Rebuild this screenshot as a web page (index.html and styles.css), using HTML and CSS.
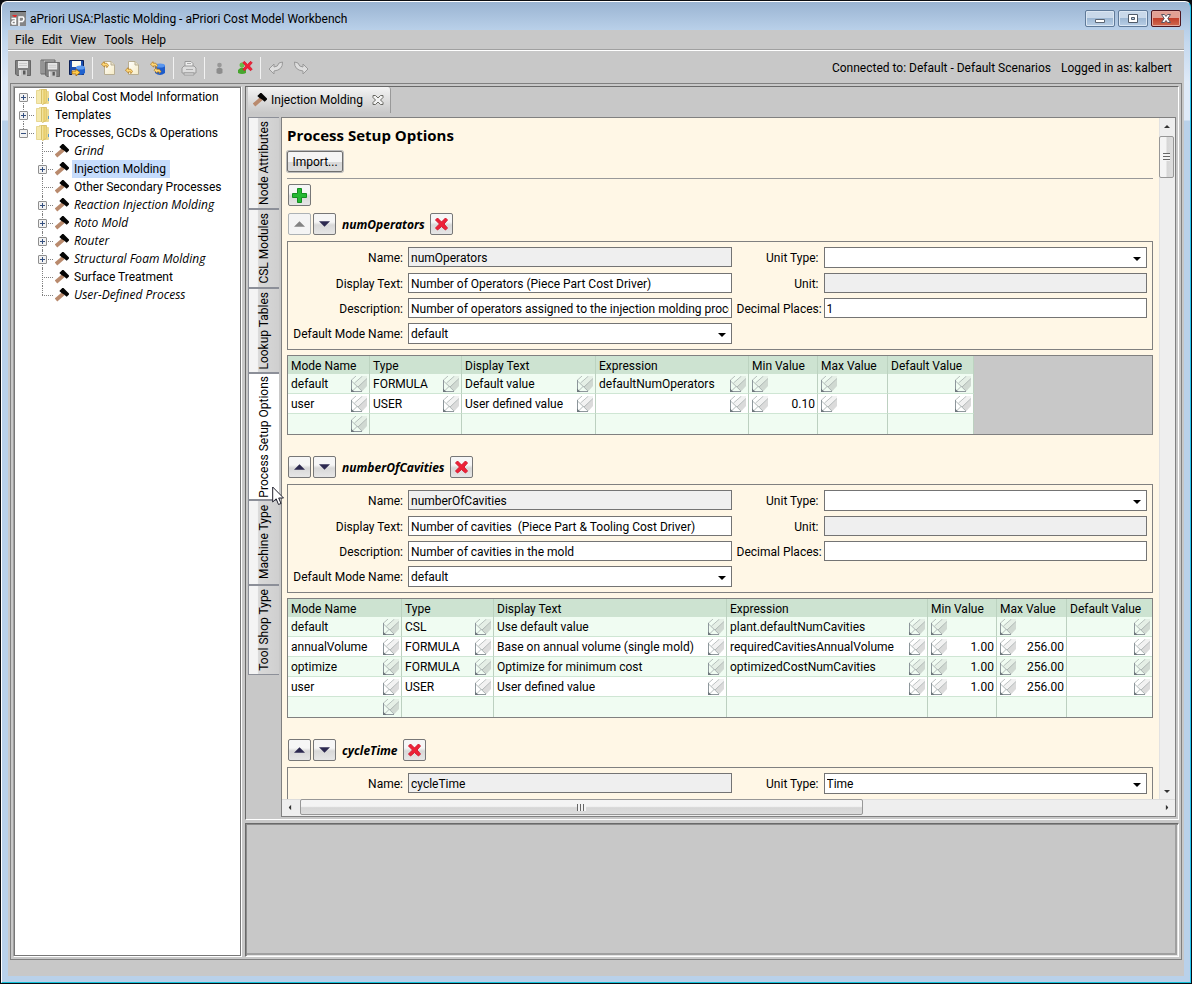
FILE: index.html
```html
<!DOCTYPE html>
<html lang="en">
<head>
<meta charset="utf-8">
<title>aPriori USA:Plastic Molding - aPriori Cost Model Workbench</title>
<link rel="stylesheet" href="styles.css">
</head>
<body>
<svg class="defs" aria-hidden="true">
  <defs>
    <linearGradient id="gold" x1="0" x2="1"><stop offset="0" stop-color="#fbf3c0"/><stop offset=".5" stop-color="#e6cb66"/><stop offset="1" stop-color="#f0dd8e"/></linearGradient>
    <linearGradient id="page-fill" x1="0" y1="0" x2="1" y2="1"><stop offset="0" stop-color="#fff"/><stop offset="1" stop-color="#f6ebc4"/></linearGradient>
    <symbol id="pencil" viewBox="0 0 16 16">
      <path d="M11 15.500L16 10V3L7 11z" fill="#888" fill-opacity=".3"/>
      <path d="M3 8L12 0H16V3L7 11z" fill="#999" fill-opacity=".13"/>
      <path d="M0 4.500L5 0M3.500 7L11.500 0M7 11L16 2.500" stroke="#909898" stroke-opacity=".6" fill="none"/>
      <path d="M.5 5L11 15M6.500 10L1 15.500" stroke="#a3abab" stroke-opacity=".8" fill="none"/>
      <path d="M.5 4V15.500H11" stroke="#8e979c" fill="none"/>
      <path d="M0 12.500L3.500 16H0z" fill="#6d767c"/>
    </symbol>
    <symbol id="hammer" viewBox="0 0 14 14">
      <path d="M1 12L8.500 5.500" stroke="#b98a6d" stroke-width="3.800"/>
      <path d="M4.300 3L7.300 0H8.500L14 5.500V6.500L11.700 8.800L9 6.500L6.500 5z" fill="#050505"/>
    </symbol>
    <symbol id="folder" viewBox="0 0 14 16">
      <path d="M.5 1.500H3.500V.5H5.500V14.500H.5z" fill="#f5e9ad" stroke="#dcc468" stroke-width=".6"/>
      <path d="M5.500 .5H10.500V13.500L6.500 15.500L5.500 14.500z" fill="url(#gold)" stroke="#cdb04a" stroke-width=".7"/>
      <path d="M10.500 2.500H12.500V14.500H8.500L10.500 13.500z" fill="#f0de90" stroke="#dcc468" stroke-width=".5"/>
      <path d="M12.500 9V12" stroke="#5e9bc9"/>
    </symbol>
    <symbol id="cross" viewBox="0 0 14 14">
      <path d="M1 3L3 1L7 5L11 1L13 3L9.500 7L13 11L11 13L7 9.500L3 13L1 11L5 7z" fill="#ee2137" stroke="#d5182e" stroke-width="1"/>
    </symbol>
    <symbol id="up" viewBox="0 0 10 5"><path d="M0 5L5 0L10 5z" fill="currentColor"/></symbol>
    <symbol id="down" viewBox="0 0 10 5"><path d="M0 0H10L5 5z" fill="currentColor"/></symbol>
    <symbol id="swap" viewBox="0 0 9 9">
      <path d="M.5 3.500L3.500 .8V2.500H6.500L8.500 5L6.500 7.500V5.500H4V7L.5 3.500z" fill="#ffd978" stroke="#b0761c" stroke-width=".8"/>
    </symbol>
    <symbol id="floppy" viewBox="0 0 16 16">
      <path d="M.5 .5H15.500V15.500H2L.5 14z" fill="#808080" stroke="#666"/>
      <path d="M3 1H13V8H3z" fill="#e6e6e6"/><path d="M4 3.500H12M4 5.500H12" stroke="#cacaca"/>
      <path d="M4 10H12V16H4z" fill="#c4c4c4"/><path d="M8 10.500H10.500V14.500H8z" fill="#5a5a5a"/>
      <path d="M5 10V15.500" stroke="#eee"/>
    </symbol>
  </defs>
</svg>

<div class="window">
  <header class="titlebar">
    <svg class="app-icon" viewBox="0 0 16 16" aria-hidden="true"><path d="M0 0H16V15H0z" fill="#858585"/><path d="M0 0H16V1H0z" fill="#222"/><path d="M2 4H7L6 6H4z" fill="#e22a2a"/><path d="M1.500 7.500H5.500V13H2.500Q1 11.500 3 10H5.500M9 15V6H13Q15 8 12.500 10.500H9" fill="none" stroke="#fff" stroke-width="1.500"/></svg>
    <h1 class="window-title">aPriori USA:Plastic Molding - aPriori Cost Model Workbench</h1>
    <div class="window-buttons">
      <button class="wb" aria-label="Minimize"><svg viewBox="0 0 28 15"><path d="M9.500 8.500H18.500V11.500H9.500z" fill="#fff" stroke="#5b6674"/></svg></button>
      <button class="wb" aria-label="Maximize"><svg viewBox="0 0 28 15"><path d="M9.500 3.500H18.500V11.500H9.500z" fill="#fff" stroke="#4f5a68"/><path d="M12.500 6.500H15.500V8.500H12.500z" fill="#b8cde4" stroke="#4f5a68"/></svg></button>
      <button class="wb wb-close" aria-label="Close"><svg viewBox="0 0 28 15"><path d="M9.500 3.500H12.500L14 5.500L15.500 3.500H18.500L15.800 7.500L18.500 11.500H15.500L14 9.500L12.500 11.500H9.500L12.200 7.500z" fill="#fff" stroke="#5b5560"/></svg></button>
    </div>
  </header>

  <nav class="menubar" aria-label="Main menu">
    <button>File</button><button>Edit</button><button>View</button><button>Tools</button><button>Help</button>
  </nav>

  <div class="toolbar">
    <div class="tool-group">
      <button aria-label="Save"><svg width="16" height="16"><use href="#floppy"/></svg></button>
      <button aria-label="Save all"><svg width="20" height="18" viewBox="0 0 20 18"><path d="M1 1H15V3H5V15H1z" fill="#c4c4c4" stroke="#666"/><path d="M3 1V15" stroke="#666"/><svg x="5" y="3" width="15" height="15"><use href="#floppy"/></svg></svg></button>
      <button aria-label="Save to database"><svg width="16" height="16" viewBox="0 0 16 16"><path d="M.5 .5H14.500V14.500H.5z" fill="#1c4fae" stroke="#0b1f55"/><path d="M3 1H12V7H3z" fill="#fbfbef"/><path d="M3 10H8V15H3z" fill="#ddd"/><path d="M7 7V13Q11.500 17 16 13V7z" fill="#1f62cf"/><ellipse cx="11.500" cy="7.500" rx="4.500" ry="2" fill="#5d9cf2"/><path d="M3 11H7V9L11 12.500L7 16V14H3z" fill="#ffcc4a" stroke="#a4650c" stroke-width=".8"/></svg></button>
    </div>
    <div class="tool-group">
      <button aria-label="Check out"><svg width="16" height="16" viewBox="0 0 16 16"><path d="M4.500 1.500H11L14.500 5V14.500H4.500z" fill="url(#page-fill)" stroke="#b8ae93"/><path d="M11 1.500V5H14.500" fill="#e8e0c8" stroke="#b8ae93"/><use href="#swap" x="1" y="1" width="8" height="8"/></svg></button>
      <button aria-label="Check in"><svg width="16" height="16" viewBox="0 0 16 16"><path d="M3.500 1.500H10L13.500 5V14.500H3.500z" fill="url(#page-fill)" stroke="#b8ae93"/><path d="M10 1.500V5H13.500" fill="#e8e0c8" stroke="#b8ae93"/><use href="#swap" x="0" y="7" width="8" height="8"/></svg></button>
      <button aria-label="Synchronize"><svg width="16" height="16" viewBox="0 0 16 16"><path d="M5 5V13Q10 17 15 13V5z" fill="#1d5ccb"/><ellipse cx="10" cy="5.500" rx="5" ry="2" fill="#5a96ee"/><use href="#swap" x="0" y="1" width="8" height="8"/><use href="#swap" x="3" y="7" width="9" height="8"/></svg></button>
    </div>
    <div class="tool-group">
      <button aria-label="Print"><svg width="16" height="16" viewBox="0 0 16 16"><path d="M4 7V1.500H10L12 3.500V7" fill="#eee" stroke="#999"/><path d="M1 8L3 6H13L15 8V13H1z" fill="#ddd" stroke="#999"/><path d="M3 13H13V15H3z" fill="#eee" stroke="#999"/><path d="M6 3.500H10M5 9.500H12" stroke="#aaa"/></svg></button>
    </div>
    <div class="tool-group">
      <button aria-label="User"><svg width="16" height="16" viewBox="0 0 16 16"><circle cx="7.500" cy="5" r="2.300" fill="#989898"/><path d="M4.500 13V9Q7.500 6 10.500 9V13Q7.500 15 4.500 13z" fill="#8d8d8d"/></svg></button>
      <button aria-label="Remove user"><svg width="16" height="16" viewBox="0 0 16 16"><circle cx="5" cy="5" r="2.500" fill="#68bd4b"/><path d="M1 13V10Q5 5 9 10V13Q5 15 1 13z" fill="#46a52e"/><use href="#cross" x="5" y="0" width="11" height="12"/></svg></button>
    </div>
    <div class="tool-group">
      <button aria-label="Undo"><svg width="16" height="16" viewBox="0 0 16 16"><path d="M1 9L6 4V7Q10 7 11 3L14.500 2Q15 10 6 11V14z" fill="#dedede" stroke="#999"/></svg></button>
      <button aria-label="Redo"><svg width="16" height="16" viewBox="0 0 16 16"><path d="M15 9L10 4V7Q6 7 5 3L1.500 2Q1 10 10 11V14z" fill="#dedede" stroke="#999"/></svg></button>
    </div>
    <p class="session"><span>Connected to: Default - Default Scenarios</span><span>Logged in as: kalbert</span></p>
  </div>

  <main class="workspace">
    <aside class="tree-panel">
      <ul class="tree">
        <li><div class="node"><button class="twist" aria-label="Expand"></button><svg class="folder"><use href="#folder"/></svg><span>Global Cost Model Information</span></div></li>
        <li><div class="node"><button class="twist" aria-label="Expand"></button><svg class="folder"><use href="#folder"/></svg><span>Templates</span></div></li>
        <li><div class="node"><button class="twist open" aria-label="Collapse"></button><svg class="folder"><use href="#folder"/></svg><span>Processes, GCDs &amp; Operations</span></div>
          <ul class="branch">
            <li><div class="node"><i class="leaf"></i><svg class="hammer"><use href="#hammer"/></svg><span class="virtual">Grind</span></div></li>
            <li><div class="node"><button class="twist" aria-label="Expand"></button><svg class="hammer"><use href="#hammer"/></svg><span class="selected">Injection Molding</span></div></li>
            <li><div class="node"><i class="leaf"></i><svg class="hammer"><use href="#hammer"/></svg><span>Other Secondary Processes</span></div></li>
            <li><div class="node"><button class="twist" aria-label="Expand"></button><svg class="hammer"><use href="#hammer"/></svg><span class="virtual">Reaction Injection Molding</span></div></li>
            <li><div class="node"><button class="twist" aria-label="Expand"></button><svg class="hammer"><use href="#hammer"/></svg><span class="virtual">Roto Mold</span></div></li>
            <li><div class="node"><button class="twist" aria-label="Expand"></button><svg class="hammer"><use href="#hammer"/></svg><span class="virtual">Router</span></div></li>
            <li><div class="node"><button class="twist" aria-label="Expand"></button><svg class="hammer"><use href="#hammer"/></svg><span class="virtual">Structural Foam Molding</span></div></li>
            <li><div class="node"><i class="leaf"></i><svg class="hammer"><use href="#hammer"/></svg><span>Surface Treatment</span></div></li>
            <li><div class="node"><i class="leaf"></i><svg class="hammer"><use href="#hammer"/></svg><span class="virtual">User-Defined Process</span></div></li>
          </ul>
        </li>
      </ul>
    </aside>

    <div class="right">
      <section class="editor">
        <div class="editor-tabs">
          <div class="editor-tab"><svg class="hammer"><use href="#hammer"/></svg><span>Injection Molding</span><button aria-label="Close tab"><svg width="12" height="12" viewBox="0 0 12 12"><path d="M1 1.500H3.500L6 4L8.500 1.500H11V3.500L8.500 6L11 8.500V10.500H8.500L6 8L3.500 10.500H1V8.500L3.500 6L1 3.500z" fill="#f3f3f3" stroke="#6a6a64"/></svg></button></div>
        </div>
        <div class="editor-body">
          <div class="side-tabs" role="tablist">
            <button role="tab" class="side-tab t-node">Node Attributes</button>
            <button role="tab" class="side-tab t-csl">CSL Modules</button>
            <button role="tab" class="side-tab t-lookup">Lookup Tables</button>
            <button role="tab" class="side-tab t-setup" aria-selected="true">Process Setup Options<svg class="pointer" viewBox="0 0 13 20" aria-hidden="true"><path d="M.7 1V16L4.200 12.800L6.500 18.500L9 17.500L6.700 12H11.500z" fill="#fff" stroke="#20202c"/></svg></button>
            <button role="tab" class="side-tab t-machine">Machine Type</button>
            <button role="tab" class="side-tab t-shop">Tool Shop Type</button>
          </div>
          <div class="scroller">
            <div class="viewport">
              <h2 class="page-title">Process Setup Options</h2>
              <button class="import">Import...</button>
              <hr>
              <button class="sq add" aria-label="Add"><svg width="15" height="15" viewBox="0 0 15 15"><path d="M5.500 .5H9.500V5.500H14.500V9.500H9.500V14.500H5.500V9.500H.5V5.500H5.500z" fill="#25b833" stroke="#138d20"/></svg></button>

              <section class="option">
                <div class="option-head">
                  <button class="sq" disabled aria-label="Move up"><svg class="arrow"><use href="#up"/></svg></button>
                  <button class="sq" aria-label="Move down"><svg class="arrow"><use href="#down"/></svg></button>
                  <h3>numOperators</h3>
                  <button class="sq" aria-label="Delete"><svg class="del"><use href="#cross"/></svg></button>
                </div>
                <div class="form">
                  <label for="n1">Name:</label><input id="n1" value="numOperators" readonly>
                  <label for="u1">Unit Type:</label><div class="pick"><select id="u1"><option></option></select></div>
                  <label for="d1">Display Text:</label><input id="d1" value="Number of Operators (Piece Part Cost Driver)">
                  <label for="un1">Unit:</label><input id="un1" readonly>
                  <label for="s1">Description:</label><input id="s1" value="Number of operators assigned to the injection molding process">
                  <label for="p1">Decimal Places:</label><input id="p1" value="1">
                  <label for="m1">Default Mode Name:</label><div class="pick"><select id="m1"><option>default</option></select></div>
                </div>
                <div class="grid-box">
                  <table class="modes">
                    <colgroup><col class="w82"><col class="w92"><col class="w134"><col class="w153"><col class="w69"><col class="w70"><col class="w86"></colgroup>
                    <thead><tr><th>Mode Name</th><th>Type</th><th>Display Text</th><th>Expression</th><th>Min Value</th><th>Max Value</th><th>Default Value</th></tr></thead>
                    <tbody>
                      <tr><td><div>default<svg><use href="#pencil"/></svg></div></td><td><div>FORMULA<svg><use href="#pencil"/></svg></div></td><td><div>Default value<svg><use href="#pencil"/></svg></div></td><td><div>defaultNumOperators<svg><use href="#pencil"/></svg></div></td><td class="num"><div><svg><use href="#pencil"/></svg></div></td><td class="num"><div><svg><use href="#pencil"/></svg></div></td><td><div><svg><use href="#pencil"/></svg></div></td></tr>
                      <tr><td><div>user<svg><use href="#pencil"/></svg></div></td><td><div>USER<svg><use href="#pencil"/></svg></div></td><td><div>User defined value<svg><use href="#pencil"/></svg></div></td><td><div><svg><use href="#pencil"/></svg></div></td><td class="num"><div><svg><use href="#pencil"/></svg>0.10</div></td><td class="num"><div><svg><use href="#pencil"/></svg></div></td><td><div><svg><use href="#pencil"/></svg></div></td></tr>
                      <tr><td><div><svg><use href="#pencil"/></svg></div></td><td></td><td></td><td></td><td></td><td></td><td></td></tr>
                    </tbody>
                  </table>
                </div>
              </section>

              <section class="option">
                <div class="option-head">
                  <button class="sq" aria-label="Move up"><svg class="arrow"><use href="#up"/></svg></button>
                  <button class="sq" aria-label="Move down"><svg class="arrow"><use href="#down"/></svg></button>
                  <h3>numberOfCavities</h3>
                  <button class="sq" aria-label="Delete"><svg class="del"><use href="#cross"/></svg></button>
                </div>
                <div class="form">
                  <label for="n2">Name:</label><input id="n2" value="numberOfCavities" readonly>
                  <label for="u2">Unit Type:</label><div class="pick"><select id="u2"><option></option></select></div>
                  <label for="d2">Display Text:</label><input id="d2" value="Number of cavities  (Piece Part &amp; Tooling Cost Driver)">
                  <label for="un2">Unit:</label><input id="un2" readonly>
                  <label for="s2">Description:</label><input id="s2" value="Number of cavities in the mold">
                  <label for="p2">Decimal Places:</label><input id="p2">
                  <label for="m2">Default Mode Name:</label><div class="pick"><select id="m2"><option>default</option></select></div>
                </div>
                <div class="grid-box">
                  <table class="modes wide">
                    <colgroup><col class="w114"><col class="w92"><col class="w233"><col class="w201"><col class="w69"><col class="w70"><col></colgroup>
                    <thead><tr><th>Mode Name</th><th>Type</th><th>Display Text</th><th>Expression</th><th>Min Value</th><th>Max Value</th><th>Default Value</th></tr></thead>
                    <tbody>
                      <tr><td><div>default<svg><use href="#pencil"/></svg></div></td><td><div>CSL<svg><use href="#pencil"/></svg></div></td><td><div>Use default value<svg><use href="#pencil"/></svg></div></td><td><div>plant.defaultNumCavities<svg><use href="#pencil"/></svg></div></td><td class="num"><div><svg><use href="#pencil"/></svg></div></td><td class="num"><div><svg><use href="#pencil"/></svg></div></td><td><div><svg><use href="#pencil"/></svg></div></td></tr>
                      <tr><td><div>annualVolume<svg><use href="#pencil"/></svg></div></td><td><div>FORMULA<svg><use href="#pencil"/></svg></div></td><td><div>Base on annual volume (single mold)<svg><use href="#pencil"/></svg></div></td><td><div>requiredCavitiesAnnualVolume<svg><use href="#pencil"/></svg></div></td><td class="num"><div><svg><use href="#pencil"/></svg>1.00</div></td><td class="num"><div><svg><use href="#pencil"/></svg>256.00</div></td><td><div><svg><use href="#pencil"/></svg></div></td></tr>
                      <tr><td><div>optimize<svg><use href="#pencil"/></svg></div></td><td><div>FORMULA<svg><use href="#pencil"/></svg></div></td><td><div>Optimize for minimum cost<svg><use href="#pencil"/></svg></div></td><td><div>optimizedCostNumCavities<svg><use href="#pencil"/></svg></div></td><td class="num"><div><svg><use href="#pencil"/></svg>1.00</div></td><td class="num"><div><svg><use href="#pencil"/></svg>256.00</div></td><td><div><svg><use href="#pencil"/></svg></div></td></tr>
                      <tr><td><div>user<svg><use href="#pencil"/></svg></div></td><td><div>USER<svg><use href="#pencil"/></svg></div></td><td><div>User defined value<svg><use href="#pencil"/></svg></div></td><td><div><svg><use href="#pencil"/></svg></div></td><td class="num"><div><svg><use href="#pencil"/></svg>1.00</div></td><td class="num"><div><svg><use href="#pencil"/></svg>256.00</div></td><td><div><svg><use href="#pencil"/></svg></div></td></tr>
                      <tr><td><div><svg><use href="#pencil"/></svg></div></td><td></td><td></td><td></td><td></td><td></td><td></td></tr>
                    </tbody>
                  </table>
                </div>
              </section>

              <section class="option">
                <div class="option-head">
                  <button class="sq" aria-label="Move up"><svg class="arrow"><use href="#up"/></svg></button>
                  <button class="sq" aria-label="Move down"><svg class="arrow"><use href="#down"/></svg></button>
                  <h3>cycleTime</h3>
                  <button class="sq" aria-label="Delete"><svg class="del"><use href="#cross"/></svg></button>
                </div>
                <div class="form">
                  <label for="n3">Name:</label><input id="n3" value="cycleTime" readonly>
                  <label for="u3">Unit Type:</label><div class="pick"><select id="u3"><option>Time</option></select></div>
                </div>
              </section>
            </div>
            <div class="vbar">
              <button aria-label="Scroll up"><svg class="mini"><use href="#up"/></svg></button>
              <div class="vthumb"><i></i></div>
              <button class="last" aria-label="Scroll down"><svg class="mini"><use href="#down"/></svg></button>
            </div>
            <div class="hbar">
              <button aria-label="Scroll left"><svg class="mini left"><use href="#up"/></svg></button>
              <div class="hthumb"><i></i></div>
              <button class="last" aria-label="Scroll right"><svg class="mini rightward"><use href="#up"/></svg></button>
            </div>
          </div>
        </div>
      </section>
      <section class="output"></section>
    </div>
  </main>
  <footer class="status"></footer>
</div>
</body>
</html>
```

FILE: styles.css
```css
* { box-sizing: border-box; }
html, body { height: 100%; }
body {
  margin: 0;
  padding: 1px;
  background: #0b0d12;
  color: #000;
  font: 12px/16px Roboto, "Open Sans", sans-serif;
  overflow: hidden;
}
button, input, select { font: inherit; color: inherit; margin: 0; padding: 0; }
button { border: 0; background: none; }
h1, h2, h3, p, ul { margin: 0; padding: 0; }
svg { display: block; flex: none; }
.defs { position: absolute; width: 0; height: 0; }

.window {
  display: flex;
  flex-direction: column;
  height: 100%;
  padding: 0 6px 6px;
  border: 1px solid #fff;
  border-right-color: #23c4ee;
  border-bottom-color: #12c0d8;
  border-radius: 6px 6px 0 0;
  background: linear-gradient(#9ab4d2 0, #b9d0e9 28px, #c4d8ee 40px, #dfeaf8 80px, #dfeaf8 118px, #b9d1ea 119px);
}
.titlebar { display: flex; align-items: center; height: 28px; padding: 5px 2px 0; gap: 4px; flex: none; }
.app-icon { width: 16px; height: 16px; }
.window-title { flex: 1; font-size: 12px; font-weight: 400; }
.window-buttons { display: flex; gap: 3px; margin-right: 1px; margin-bottom: 1px; }
.wb {
  width: 30px; height: 17px;
  border: 1px solid #5f7a99; border-radius: 2px;
  background: linear-gradient(#c9d9ea 0 45%, #9db8d4 50%, #b9cfe6);
  box-shadow: inset 0 0 0 1px #dbe7f3;
}
.wb svg { width: 28px; height: 15px; }
.wb-close { border-color: #4d1620; background: linear-gradient(#e2a094 0 45%, #c2402c 50%, #cf6a50); box-shadow: inset 0 0 0 1px #e5aaa0; }

.menubar { display: flex; gap: 8px; height: 21px; flex: none; padding: 2px 7px 0; background: #c8c8c8; border-bottom: 1px solid #fff; box-shadow: inset 0 -1px #a0a0a0; }
.menubar button { height: 16px; }

.toolbar { display: flex; align-items: center; height: 32px; flex: none; padding: 1px 12px 0 7px; background: #c8c8c8; }
.tool-group { display: flex; align-items: center; gap: 9px; height: 22px; padding-right: 7px; margin-right: 7px; border-right: 1px solid #f2f2f2; }
.tool-group:nth-of-type(5) { border-right: 0; }
.session { display: flex; gap: 10px; margin-left: auto; }

.workspace { display: flex; gap: 3px; flex: 1; min-height: 0; padding: 2px; border: 1px solid #808080; background: #c8c8c8; outline: 2px solid #c8c8c8; margin: 0 2px; }
.status { height: 16px; flex: none; background: #c8c8c8; }

.tree-panel { width: 229px; flex: none; border: 1px solid #fff; border-left-color: #a0a0a0; border-top-color: #a0a0a0; background: #fff; box-shadow: inset 0 0 0 1px #777; padding: 1px; }
.tree, .tree ul { list-style: none; }
.tree { padding-left: 4px; }
.tree li { position: relative; }
.node { display: flex; align-items: center; height: 18px; }
.node span { padding: 0 4px 0 2px; line-height: 18px; white-space: nowrap; }
.node .selected { background: #c6dcfc; }
.node .virtual { font-family: "Open Sans", sans-serif; font-style: italic; }
.folder { width: 14px; height: 16px; margin: 0 3px 0 8px; }
.hammer { width: 14px; height: 14px; }
.node .hammer { margin: 0 3px 0 8px; }
.branch { padding-left: 19px; }
.twist {
  position: relative; z-index: 1; width: 9px; height: 9px; flex: none;
  border: 1px solid #8f8f8f; border-radius: 1px;
  background: linear-gradient(#35507f, #35507f) center / 5px 1px no-repeat, linear-gradient(#35507f, #35507f) center / 1px 5px no-repeat, #f2f2f2;
}
.twist.open { background: linear-gradient(#35507f, #35507f) center / 5px 1px no-repeat, #f2f2f2; }
.leaf { width: 9px; flex: none; }
.tree li::before { content: ""; position: absolute; left: 4px; top: 0; bottom: 0; border-left: 1px dotted #808080; }
.tree > li:first-child::before { top: 9px; }
.tree li:last-child::before { bottom: auto; height: 9px; }
.tree li::after { content: ""; position: absolute; left: 4px; top: 9px; width: 11px; border-top: 1px dotted #808080; }

.right { display: flex; flex-direction: column; gap: 3px; flex: 1; min-width: 0; }
.editor { display: flex; flex-direction: column; flex: 1; min-height: 0; padding: 0 2px 2px; border: 1px solid #fff; border-top-color: #696969; border-left-color: #696969; }
.output { height: 134px; flex: none; border: 1px solid #fff; border-top-color: #696969; border-left-color: #696969; box-shadow: inset 1px 1px #8c8c8c, inset -1px -1px #e3e3e3, inset -3px -3px #a0a0a0; }
.editor-tabs { height: 30px; flex: none; }
.editor-tab { display: inline-flex; align-items: center; gap: 4px; height: 26px; padding: 0 6px 0 5px; border-right: 1px solid #999; border-radius: 0 3px 0 0; background: linear-gradient(#f4f4f4, #c8c8c8); }
.editor-tab button { margin-left: 5px; }
.editor-body { display: flex; flex: 1; min-height: 0; }

.side-tabs { width: 33px; flex: none; }
.side-tab {
  position: relative; display: flex; align-items: center; justify-content: center; width: 31px;
  writing-mode: sideways-lr; white-space: nowrap;
  border: 1px solid #8c8f98; border-right: 0;
  background: linear-gradient(90deg, #f4f4f4 0 28%, #d9d9d9 32%, #cfcfcf);
}
.side-tab[aria-selected] { background: #fff; z-index: 2; }
.t-node { height: 92px; }
.t-csl { height: 79px; }
.t-lookup { height: 85px; }
.t-setup { height: 127px; }
.t-machine { height: 85px; }
.t-shop { height: 90px; }
.pointer { position: absolute; left: 23px; bottom: -7px; width: 13px; height: 20px; }

.scroller { display: grid; grid-template: minmax(0, 1fr) 17px / minmax(0, 1fr) 16px; flex: 1; min-width: 0; border: 1px solid #808080; }
.viewport { overflow: hidden; padding: 5px 6px 0 5px; background: #fff7e6; }
.page-title { font: 700 15px/24px "Open Sans", sans-serif; margin-bottom: 4px; }
.import { display: block; width: 56px; height: 21px; border: 1px solid #6f6f6f; border-radius: 2px; background: linear-gradient(#f4f4f4 50%, #d9d9d9 55%, #dcdcdc); box-shadow: 0 0 0 1px #bbb; }
hr { height: 1px; margin: 6px 0 5px; border: 0; background: #999; }
.sq { display: flex; align-items: center; justify-content: center; width: 23px; height: 22px; border: 1px solid #777; border-radius: 2px; background: linear-gradient(#f6f6f6 40%, #d8d8d8 55%, #e6e6e6); color: #2c2950; flex: none; }
.sq:disabled { border-color: #adb2b5; background: #f4f4f4; color: #838383; }
.add { margin-left: 1px; }
.arrow { width: 11px; height: 6px; }
.del { width: 15px; height: 14px; }
.option-head { display: flex; align-items: center; gap: 2px; padding-left: 1px; margin: 7px 0 6px; }
.option-head h3 { margin: 0 3px 0 4px; padding-top: 1px; font: italic 700 12px/16px "Open Sans", sans-serif; }
.option + .option .option-head { margin-top: 21px; }

.form { display: grid; grid-template-columns: 110px minmax(0, 1fr) 82px minmax(0, 1fr); gap: 5px; padding: 5px; border: 1px solid #808080; }
.form label { text-align: right; line-height: 22px; height: 20px; white-space: nowrap; }
.form input, .form select { display: block; width: 100%; height: 20px; padding: 1px 2px 0; border: 1px solid #747474; border-radius: 0; background: #fff; outline: 0; }
.form input:read-only { background: #efefef; }
.pick { position: relative; }
.form select { height: 21px; appearance: none; }
.pick::after { content: ""; position: absolute; right: 6px; top: 10px; border: 4px solid transparent; border-top-color: #000; border-bottom: 0; }

.grid-box { margin-top: 5px; border: 1px solid #808080; background: #c8c8c8; }
.modes { width: 686px; table-layout: fixed; border-collapse: separate; border-spacing: 0; }
.modes.wide { width: 100%; }
.w69 { width: 69px; } .w70 { width: 70px; } .w82 { width: 82px; } .w86 { width: 86px; } .w92 { width: 92px; }
.w114 { width: 114px; } .w134 { width: 134px; } .w153 { width: 153px; } .w201 { width: 201px; } .w233 { width: 233px; }
.modes th { height: 18px; padding: 2px 0 0 3px; font-weight: 400; text-align: left; line-height: 16px; white-space: nowrap; background: #cde3d1; border-right: 1px solid #bcd3c0; }
.modes td { height: 20px; padding: 0 2px 0 3px; border-right: 1px solid #bcd0c0; border-bottom: 1px solid #cfe6d4; background: #f0fcf2; white-space: nowrap; }
.modes tr:nth-child(even) td { background: #fff; }
.modes tbody tr:last-child td { border-bottom: 0; }
.modes.wide tr > :last-child { border-right: 0; }
.modes div { display: flex; align-items: center; justify-content: space-between; height: 19px; line-height: 20px; }
.modes svg { width: 16px; height: 16px; margin-left: auto; }
.modes .num svg { margin: 0 auto 0 0; }

.vbar { display: flex; flex-direction: column; background: #eee; box-shadow: inset 1px 0 #e2e2e2; }
.hbar { grid-column: 1 / 3; display: flex; background: #eee; box-shadow: inset 0 1px #ddd; }
.vbar button, .hbar button { display: flex; align-items: center; justify-content: center; width: 16px; height: 16px; flex: none; color: #333; }
.vbar .last { margin-top: auto; }
.hbar .last { margin-left: auto; }
.mini { width: 6px; height: 3px; }
.left { transform: rotate(-90deg); }
.rightward { transform: rotate(90deg); }
.vthumb, .hthumb { display: flex; align-items: center; justify-content: center; border: 1px solid #979797; border-radius: 2px; }
.vthumb { height: 42px; width: 15px; margin-top: 2px; background: linear-gradient(90deg, #f4f4f4 45%, #d6d6d6 55%, #dedede); }
.hthumb { width: 63%; height: 16px; margin-left: 2px; background: linear-gradient(#f4f4f4 45%, #d6d6d6 55%, #dcdcdc); }
.vthumb i { width: 7px; height: 8px; background: repeating-linear-gradient(#666 0 1px, #f4f4f4 1px 3px); }
.hthumb i { width: 9px; height: 7px; background: repeating-linear-gradient(90deg, #666 0 1px, #f4f4f4 1px 3px); }
```
